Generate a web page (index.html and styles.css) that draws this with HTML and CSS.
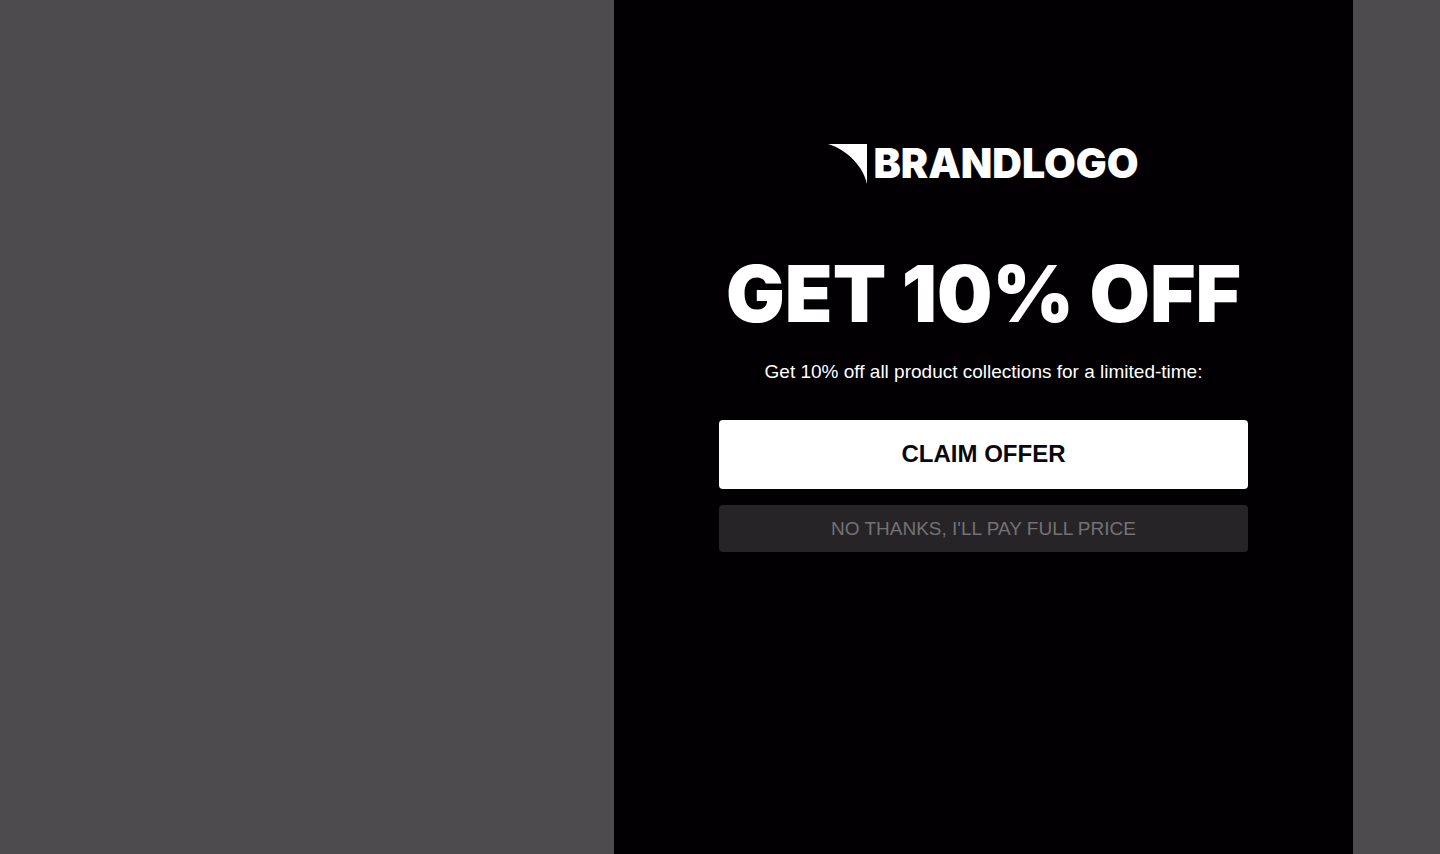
FILE: index.html
```html
<!DOCTYPE html>
<html lang="en">
<head>
  <meta charset="UTF-8">
  <title>Get 10% Off</title>
  <meta name="viewport" content="width=device-width, initial-scale=1.0">
  <link rel="stylesheet" href="styles.css">
</head>
<body>

<main class="popup">
  <div class="logo">
    <svg class="logo-mark" viewBox="0 0 39 41" aria-hidden="true">
      <path d="M0 1H39V41C36 25 20 7 0 1Z" fill="#fff"/>
    </svg>
    <span class="logo-name">BRANDLOGO</span>
  </div>

  <h1 class="title">GET 10% OFF</h1>
  <p class="text">Get 10% off all product collections for a limited-time:</p>

  <div class="actions">
    <button class="btn btn-claim" type="button">CLAIM OFFER</button>
    <button class="btn btn-decline" type="button">NO THANKS, I'LL PAY FULL PRICE</button>
  </div>
</main>

</body>
</html>
```

FILE: styles.css
```css
* {
  box-sizing: border-box;
}
body {
  margin: 0;
  min-height: 100vh;
  display: flex;
  justify-content: flex-end;
  background: #4d4b4d;
  font-family: "Liberation Sans", Arial, sans-serif;
}

/* Popup column */
.popup {
  width: 739px;
  max-width: 100%;
  margin-right: 87px;
  padding: 143px 105px 48px;
  background: #020003;
  color: #fff;
  text-align: center;
}

/* Logo */
.logo {
  display: flex;
  justify-content: center;
  gap: 6px;
}
.logo-mark {
  width: 39px;
  height: 41px;
}
.logo-name {
  font-family: Inter, sans-serif;
  font-size: 41px;
  font-weight: 900;
  line-height: 41px;
}

.title {
  margin: 70px 0 0;
  font-family: Inter, sans-serif;
  font-size: 78px;
  font-weight: 900;
  line-height: 80px;
  white-space: nowrap;
}
.text {
  margin: 26px 0 0;
  font-size: 19px;
  line-height: 24px;
}

/* Buttons */
.actions {
  display: flex;
  flex-direction: column;
  gap: 16px;
  margin-top: 36px;
}
.btn {
  width: 100%;
  border: 0;
  border-radius: 4px;
  font-family: inherit;
  cursor: pointer;
}
.btn-claim {
  padding: 20px;
  background: #fff;
  color: #0a080b;
  font-size: 24px;
  font-weight: bold;
  line-height: 28px;
  padding-bottom: 21px;
}
.btn-decline {
  padding: 12px;
  background: #262427;
  color: #747275;
  font-size: 19px;
  line-height: 23px;
}
```
